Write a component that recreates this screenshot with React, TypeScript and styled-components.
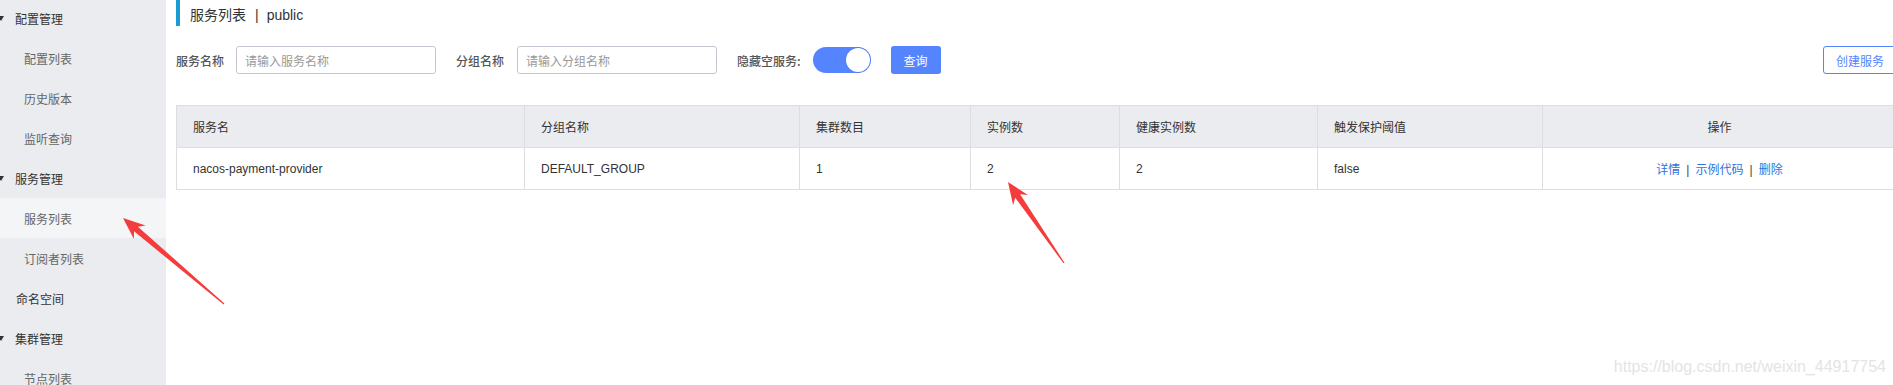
import React from "react";
import styled, { createGlobalStyle } from "styled-components";

const Global = createGlobalStyle`
  html, body {
    margin: 0;
    padding: 0;
    overflow: hidden;
    background: #fff;
  }
  body {
    font-family: "Liberation Sans", "Noto Sans CJK SC", sans-serif;
    font-size: 12px;
    color: #333;
  }
  * { box-sizing: border-box; }
`;

const Page = styled.div`
  position: relative;
  display: flex;
  width: 1896px;
  height: 385px;
  overflow: hidden;
`;

const Sidebar = styled.nav`
  flex: 0 0 166px;
  width: 166px;
  height: 100%;
  background: #eaecf0;
  overflow: hidden;
`;

const NavList = styled.ul`
  list-style: none;
  margin: -2px 0 0;
  padding: 0;
`;

const NavItem = styled.li<{ $sub?: boolean; $active?: boolean; $caret?: boolean }>`
  display: flex;
  align-items: center;
  height: 40px;
  padding-left: ${(p) => (p.$sub ? "24px" : p.$caret ? "0" : "16px")};
  background: ${(p) => (p.$active ? "#f4f5f7" : "transparent")};
  color: ${(p) => (p.$sub ? "#666" : "#333")};
  font-size: 12px;
  font-weight: 400;
  font-family: "Noto Sans CJK SC", sans-serif;
`;

const Caret = styled.span`
  width: 0;
  height: 0;
  margin-left: -2px;
  margin-right: 11px;
  border-left: 3.5px solid transparent;
  border-right: 3.5px solid transparent;
  border-top: 5px solid #333;
`;

const Main = styled.main`
  flex: 1;
  padding-left: 10px;
`;

const Title = styled.div`
  height: 26px;
  border-left: 4px solid #1b9bd4;
  padding: 4px 0 0 10px;
  line-height: 22px;
  font-size: 14px;
  color: #333;
  font-family: "Liberation Sans", "Noto Sans CJK SC", sans-serif;
`;

const TitleSep = styled.span`
  margin: 0 8px 0 9px;
`;

const FilterRow = styled.div`
  display: flex;
  align-items: center;
  height: 28px;
  margin-top: 20px;
`;

const Label = styled.label<{ $gap?: number }>`
  font-size: 12px;
  font-weight: 500;
  color: #555;
  font-family: "Noto Sans CJK SC", sans-serif;
  margin-right: ${(p) => p.$gap ?? 12}px;
  white-space: nowrap;
`;

const Input = styled.input`
  width: 200px;
  height: 28px;
  border: 1px solid #c4c6cf;
  border-radius: 3px;
  padding: 0 8px;
  margin-right: 20px;
  font-size: 12px;
  font-family: "Noto Sans CJK SC", sans-serif;
  color: #333;
  outline: none;
  &::placeholder {
    color: #999;
  }
`;

const Switch = styled.div`
  display: flex;
  align-items: center;
  justify-content: flex-end;
  width: 58px;
  height: 26px;
  border-radius: 13px;
  background: #5584ff;
  padding: 1px;
  margin-right: 20px;
`;

const Knob = styled.span`
  width: 24px;
  height: 24px;
  border-radius: 50%;
  background: #fff;
  box-shadow: 0 0 0 0.5px #4a78ee;
`;

const PrimaryButton = styled.button`
  height: 28px;
  width: 50px;
  border: none;
  border-radius: 3px;
  background: #5584ff;
  color: #fff;
  font-size: 12px;
  font-family: "Noto Sans CJK SC", sans-serif;
  padding: 0;
`;

const OutlineButton = styled.button`
  margin-left: auto;
  height: 28px;
  padding: 0 12px;
  border: 1px solid #5584ff;
  border-radius: 3px;
  background: #fff;
  color: #5584ff;
  font-size: 12px;
  font-family: "Noto Sans CJK SC", sans-serif;
`;

const Table = styled.table`
  margin-top: 31px;
  width: 1720px;
  table-layout: fixed;
  border-collapse: collapse;
  border: 1px solid #dcdee3;
  font-size: 12px;
  color: #333;
`;

const Th = styled.th<{ $center?: boolean }>`
  height: 42px;
  padding: 0 16px;
  background: #ebecf0;
  border: 1px solid #dcdee3;
  text-align: ${(p) => (p.$center ? "center" : "left")};
  font-weight: normal;
  font-family: "Noto Sans CJK SC", sans-serif;
`;

const Td = styled.td<{ $center?: boolean }>`
  height: 42px;
  padding: 0 16px;
  border: 1px solid #dcdee3;
  text-align: ${(p) => (p.$center ? "center" : "left")};
  font-family: "Liberation Sans", "Noto Sans CJK SC", sans-serif;
`;

const Link = styled.a`
  color: #2f72e0;
  text-decoration: none;
  font-family: "Noto Sans CJK SC", sans-serif;
`;

const LinkSep = styled.span`
  margin: 0 6px;
  color: #444;
  font-family: "Liberation Sans", sans-serif;
`;

const Overlay = styled.svg`
  position: absolute;
  left: 0;
  top: 0;
  pointer-events: none;
`;

const Watermark = styled.div`
  position: absolute;
  right: 10px;
  bottom: 9px;
  font-size: 16px;
  font-family: "Liberation Sans", sans-serif;
  color: #e4e4e4;
  pointer-events: none;
`;

function arrowPoints(tip: [number, number], tail: [number, number]) {
  const dx = tip[0] - tail[0];
  const dy = tip[1] - tail[1];
  const len = Math.hypot(dx, dy);
  const ux = dx / len;
  const uy = dy / len;
  const nx = -uy;
  const ny = ux;
  const h = 22;
  const w = 9;
  const bx = tip[0] - ux * h;
  const by = tip[1] - uy * h;
  const b2x = tip[0] - ux * (h - 5);
  const b2y = tip[1] - uy * (h - 5);
  const pts: [number, number][] = [
    tip,
    [bx + nx * w, by + ny * w],
    [b2x + nx * 3, b2y + ny * 3],
    [tail[0] + nx * 0.6, tail[1] + ny * 0.6],
    [tail[0] - nx * 0.6, tail[1] - ny * 0.6],
    [b2x - nx * 3, b2y - ny * 3],
    [bx - nx * w, by - ny * w],
  ];
  return pts.map((p) => `${p[0].toFixed(1)},${p[1].toFixed(1)}`).join(" ");
}

const columns = [
  { title: "服务名", width: 348 },
  { title: "分组名称", width: 275 },
  { title: "集群数目", width: 171 },
  { title: "实例数", width: 149 },
  { title: "健康实例数", width: 198 },
  { title: "触发保护阈值", width: 225 },
  { title: "操作", width: 354, center: true },
];

const row = ["nacos-payment-provider", "DEFAULT_GROUP", "1", "2", "2", "false"];

const nav = [
  { label: "配置管理", caret: true },
  { label: "配置列表", sub: true },
  { label: "历史版本", sub: true },
  { label: "监听查询", sub: true },
  { label: "服务管理", caret: true },
  { label: "服务列表", sub: true, active: true },
  { label: "订阅者列表", sub: true },
  { label: "命名空间" },
  { label: "集群管理", caret: true },
  { label: "节点列表", sub: true },
];

export default function App() {
  return (
    <>
      <Global />
      <Page>
        <Sidebar>
          <NavList>
            {nav.map((n) => (
              <NavItem key={n.label} $sub={n.sub} $active={n.active} $caret={n.caret}>
                {n.caret && <Caret />}
                {n.label}
              </NavItem>
            ))}
          </NavList>
        </Sidebar>
        <Main>
          <Title>
            服务列表<TitleSep>|</TitleSep>public
          </Title>
          <FilterRow>
            <Label>服务名称</Label>
            <Input placeholder="请输入服务名称" />
            <Label $gap={13}>分组名称</Label>
            <Input placeholder="请输入分组名称" />
            <Label>隐藏空服务:</Label>
            <Switch>
              <Knob />
            </Switch>
            <PrimaryButton>查询</PrimaryButton>
            <OutlineButton>创建服务</OutlineButton>
          </FilterRow>
          <Table>
            <colgroup>
              {columns.map((c) => (
                <col key={c.title} style={{ width: c.width }} />
              ))}
            </colgroup>
            <thead>
              <tr>
                {columns.map((c) => (
                  <Th key={c.title} $center={c.center}>
                    {c.title}
                  </Th>
                ))}
              </tr>
            </thead>
            <tbody>
              <tr>
                {row.map((v, i) => (
                  <Td key={i}>{v}</Td>
                ))}
                <Td $center>
                  <Link>详情</Link>
                  <LinkSep>|</LinkSep>
                  <Link>示例代码</Link>
                  <LinkSep>|</LinkSep>
                  <Link>删除</Link>
                </Td>
              </tr>
            </tbody>
          </Table>
        </Main>
        <Overlay width="1896" height="385" viewBox="0 0 1896 385">
          <polygon points={arrowPoints([123, 218], [224, 304])} fill="#f53c3c" />
          <polygon points={arrowPoints([1008, 182], [1064, 263])} fill="#f53c3c" />
        </Overlay>
        <Watermark>https://blog.csdn.net/weixin_44917754</Watermark>
      </Page>
    </>
  );
}
